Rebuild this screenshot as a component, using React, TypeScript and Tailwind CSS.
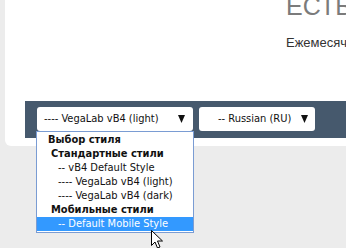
import React from "react";

const tahoma = { fontFamily: 'Tahoma, "DejaVu Sans Condensed", "Noto Sans", sans-serif' };

function Arrow() {
  return (
    <svg width="7" height="8" viewBox="0 0 7 8" className="block">
      <path d="M0 0 H7 L3.5 8 Z" fill="#111" />
    </svg>
  );
}

function Cursor() {
  return (
    <svg width="13" height="19" viewBox="0 0 13 19" className="block">
      <path
        d="M0.5 0.5 L0.5 15.5 L4 12 L6.5 18 L9 17 L6.5 11 L11.5 11 Z"
        fill="#fff"
        stroke="#000"
        strokeWidth="1"
        strokeLinejoin="miter"
      />
    </svg>
  );
}

export default function App() {
  return (
    <div className="relative w-[346px] h-[248px] overflow-hidden bg-[#ececec]">
      <div className="ml-[5px] h-[146px] bg-white rounded-bl-[6px] flex flex-col overflow-hidden">
        <div className="h-[101px] pl-[281px] overflow-hidden">
          <div
            className="whitespace-nowrap text-[25px] leading-[25px] text-[#7b7b7b] mt-[-6px]"
            style={{ fontFamily: '"Liberation Sans", Arial, sans-serif' }}
          >
            ЕСТЬ ВОПРОСЫ?
          </div>
          <div
            className="whitespace-nowrap text-[13px] leading-[15px] text-[#333] mt-[16px]"
            style={{ fontFamily: '"Liberation Sans", Arial, sans-serif' }}
          >
            Ежемесячный отчёт
          </div>
        </div>
        <div className="ml-[20px] h-[37px] bg-[#46596d] flex items-start gap-[6px] pl-[12px] pt-[6px]">
          <div
            className="w-[156px] h-[24px] bg-white rounded-[3px] flex items-center justify-between pl-[7px] pr-[8px] text-[11px] text-[#111]"
            style={tahoma}
          >
            <span className="whitespace-nowrap">---- VegaLab vB4 (light)</span>
            <Arrow />
          </div>
          <div
            className="w-[116px] h-[24px] bg-white rounded-[3px] flex items-center justify-between pl-[19px] pr-[7px] text-[11px] text-[#111]"
            style={tahoma}
          >
            <span className="whitespace-nowrap">-- Russian (RU)</span>
            <Arrow />
          </div>
        </div>
      </div>

      <div
        className="absolute left-[36px] top-[131px] w-[158px] border border-[#7a9cd3] bg-white flex flex-col py-[1px] text-[11px] leading-[14px] text-[#111]"
        style={tahoma}
      >
        <div className="pl-[11px] font-bold whitespace-nowrap">Выбор стиля</div>
        <div className="pl-[14px] font-bold whitespace-nowrap">Стандартные стили</div>
        <div className="pl-[21px] whitespace-nowrap">-- vB4 Default Style</div>
        <div className="pl-[21px] whitespace-nowrap">---- VegaLab vB4 (light)</div>
        <div className="pl-[21px] whitespace-nowrap">---- VegaLab vB4 (dark)</div>
        <div className="pl-[14px] font-bold whitespace-nowrap">Мобильные стили</div>
        <div className="pl-[21px] whitespace-nowrap bg-[#3399ff] text-white">-- Default Mobile Style</div>
      </div>

      <div className="absolute left-[151px] top-[230px]">
        <Cursor />
      </div>
    </div>
  );
}
